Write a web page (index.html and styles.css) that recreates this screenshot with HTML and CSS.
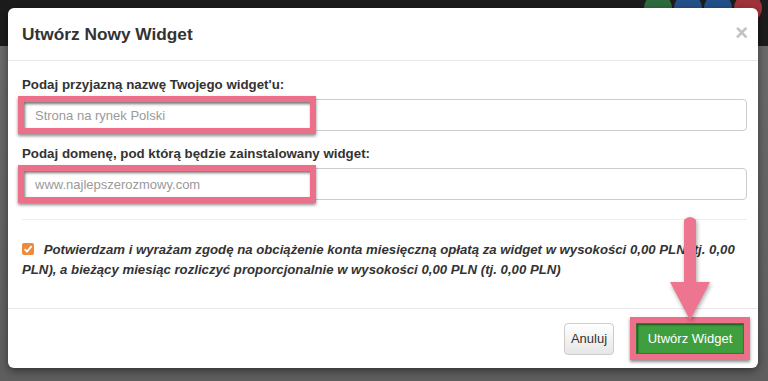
FILE: index.html
```html
<!DOCTYPE html>
<html lang="pl">
  <head>
    <meta charset="UTF-8" />
    <meta name="viewport" content="width=device-width, initial-scale=1.0" />
    <title>Utwórz Nowy Widget</title>
    <link rel="stylesheet" href="styles.css">
  </head>
  <body>
    <!-- page behind the modal backdrop -->
    <div class="page">
      <div class="topbar">
        <span class="social green"></span>
        <span class="social blue"></span>
        <span class="social blue"></span>
        <span class="social red"></span>
      </div>
    </div>

    <div class="modal">
      <div class="modal-header">
        <h4 class="modal-title">Utwórz Nowy Widget</h4>
        <span class="close">&times;</span>
      </div>

      <div class="modal-body">
        <div class="form-group">
          <label class="label">Podaj przyjazną nazwę Twojego widget'u:</label>
          <div class="field">
            <input class="input" type="text" placeholder="Strona na rynek Polski">
            <div class="mark"></div>
          </div>
        </div>

        <div class="form-group">
          <label class="label">Podaj domenę, pod którą będzie zainstalowany widget:</label>
          <div class="field">
            <input class="input" type="text" placeholder="www.najlepszerozmowy.com">
            <div class="mark"></div>
          </div>
        </div>

        <hr class="divider">

        <p class="agree">
          <span class="check">
            <svg width="12" height="12" viewBox="0 0 12 12">
              <rect x="0" y="0" width="12" height="12" rx="2" fill="#ee8a3c" />
              <path d="M2.6 6.2 L5 8.6 L9.6 3.2" stroke="#fff" stroke-width="1.8" fill="none" />
            </svg>
          </span>
          Potwierdzam i wyrażam zgodę na obciążenie konta miesięczną opłatą za widget w wysokości 0,00 PLN (tj. 0,00 PLN), a bieżący miesiąc rozliczyć proporcjonalnie w wysokości 0,00 PLN (tj. 0,00 PLN)
        </p>
      </div>

      <div class="modal-footer">
        <button class="btn btn-default">Anuluj</button>
        <span class="btn-mark">
          <button class="btn btn-success">Utwórz Widget</button>
        </span>
      </div>

      <!-- annotation arrow pointing at the submit button -->
      <svg class="arrow" width="60" height="112" viewBox="0 0 60 112">
        <path d="M24 6 Q30 0 36 6 L36 68 L50 68 L30 106 L10 68 L24 68 Z" fill="#ee7590" />
      </svg>
    </div>
  </body>
</html>
```

FILE: styles.css
```css
body {
  margin: 0;
  overflow: hidden;
  background: #636363;
  font-family: "Liberation Sans", Arial, sans-serif;
}

.page {
  height: 381px;
  background: linear-gradient(to bottom, #1c1c1c 0, #1c1c1c 46px, #6a6a6a 46px, #5e5e5e 100%);
}

.topbar {
  display: flex;
  justify-content: flex-end;
  gap: 2px;
  padding: 0 6px 0 0;
  height: 46px;
}

.social {
  width: 28px;
  height: 28px;
  border-radius: 50%;
  margin-top: -6px;
}
.social.green { background: #2d6b3f; }
.social.blue { background: #23508a; }
.social.red { background: #a0333a; }

.modal {
  position: absolute;
  top: 8px;
  left: 8px;
  width: 750px;
  height: 360px;
  background: #fff;
  border-radius: 6px;
  box-shadow: 0 3px 8px rgba(0, 0, 0, 0.45);
  display: flex;
  flex-direction: column;
}

.modal-header {
  display: flex;
  align-items: center;
  justify-content: space-between;
  height: 52px;
  padding: 0 10px 0 14px;
  border-bottom: 1px solid #e8e8e8;
}

.modal-title {
  margin: 0;
  font-size: 17.3px;
  font-weight: bold;
  color: #333;
}

.close {
  font-size: 22px;
  font-weight: bold;
  color: #c2c2c2;
  line-height: 1;
  margin-top: -2px;
}

.modal-body {
  flex: 1;
  padding: 15px 11px 0 14px;
}

.form-group {
  margin-bottom: 14px;
}

.label {
  display: block;
  font-size: 13.3px;
  font-weight: bold;
  color: #333;
  line-height: 18px;
  margin-bottom: 5px;
}

.field {
  position: relative;
}

.input {
  display: block;
  box-sizing: border-box;
  width: 100%;
  height: 32px;
  padding: 0 12px;
  border: 1px solid #ccc;
  border-radius: 4px;
  font-family: inherit;
  font-size: 13px;
  color: #555;
}
.input::placeholder {
  color: #9a9a9a;
}

/* pink annotation frame drawn over the input */
.mark {
  position: absolute;
  top: -3px;
  left: -4px;
  width: 298px;
  height: 38px;
  box-sizing: border-box;
  border: 6px solid #ec7089;
  box-shadow: 0 2px 3px rgba(0, 0, 0, 0.45), inset 1px 2px 3px rgba(0, 0, 0, 0.55);
}

.divider {
  border: 0;
  border-top: 1px solid #eee;
  margin: 19px 0 0;
}

.agree {
  margin: 20px 0 0;
  font-size: 13.2px;
  font-weight: bold;
  font-style: italic;
  line-height: 19px;
  color: #333;
}

.check {
  display: inline-block;
  vertical-align: -1px;
  margin-right: 6px;
}

.modal-footer {
  display: flex;
  justify-content: flex-end;
  align-items: center;
  gap: 16px;
  height: 59px;
  padding: 0 8px 0 0;
  border-top: 1px solid #e8e8e8;
}

.btn {
  height: 32px;
  padding: 0 10px;
  border-radius: 4px;
  font-family: inherit;
  font-size: 13px;
}

.btn-default {
  background: linear-gradient(to bottom, #fff 0%, #e6e6e6 100%);
  border: 1px solid #ccc;
  color: #333;
  width: 50px;
  padding: 0;
}

.btn-mark {
  display: block;
  border: 6px solid #ec7089;
  box-shadow: 0 2px 3px rgba(0, 0, 0, 0.45);
}

.btn-success {
  display: block;
  height: 31px;
  width: 108px;
  background: #3f9f3f;
  border: 1px solid #2f7e2f;
  border-radius: 0;
  color: #fff;
  box-shadow: inset 1px 1px 2px rgba(0, 0, 0, 0.5);
}

.arrow {
  position: absolute;
  left: 652px;
  top: 206px;
  filter: drop-shadow(1px 2px 2px rgba(0, 0, 0, 0.35));
}
```
